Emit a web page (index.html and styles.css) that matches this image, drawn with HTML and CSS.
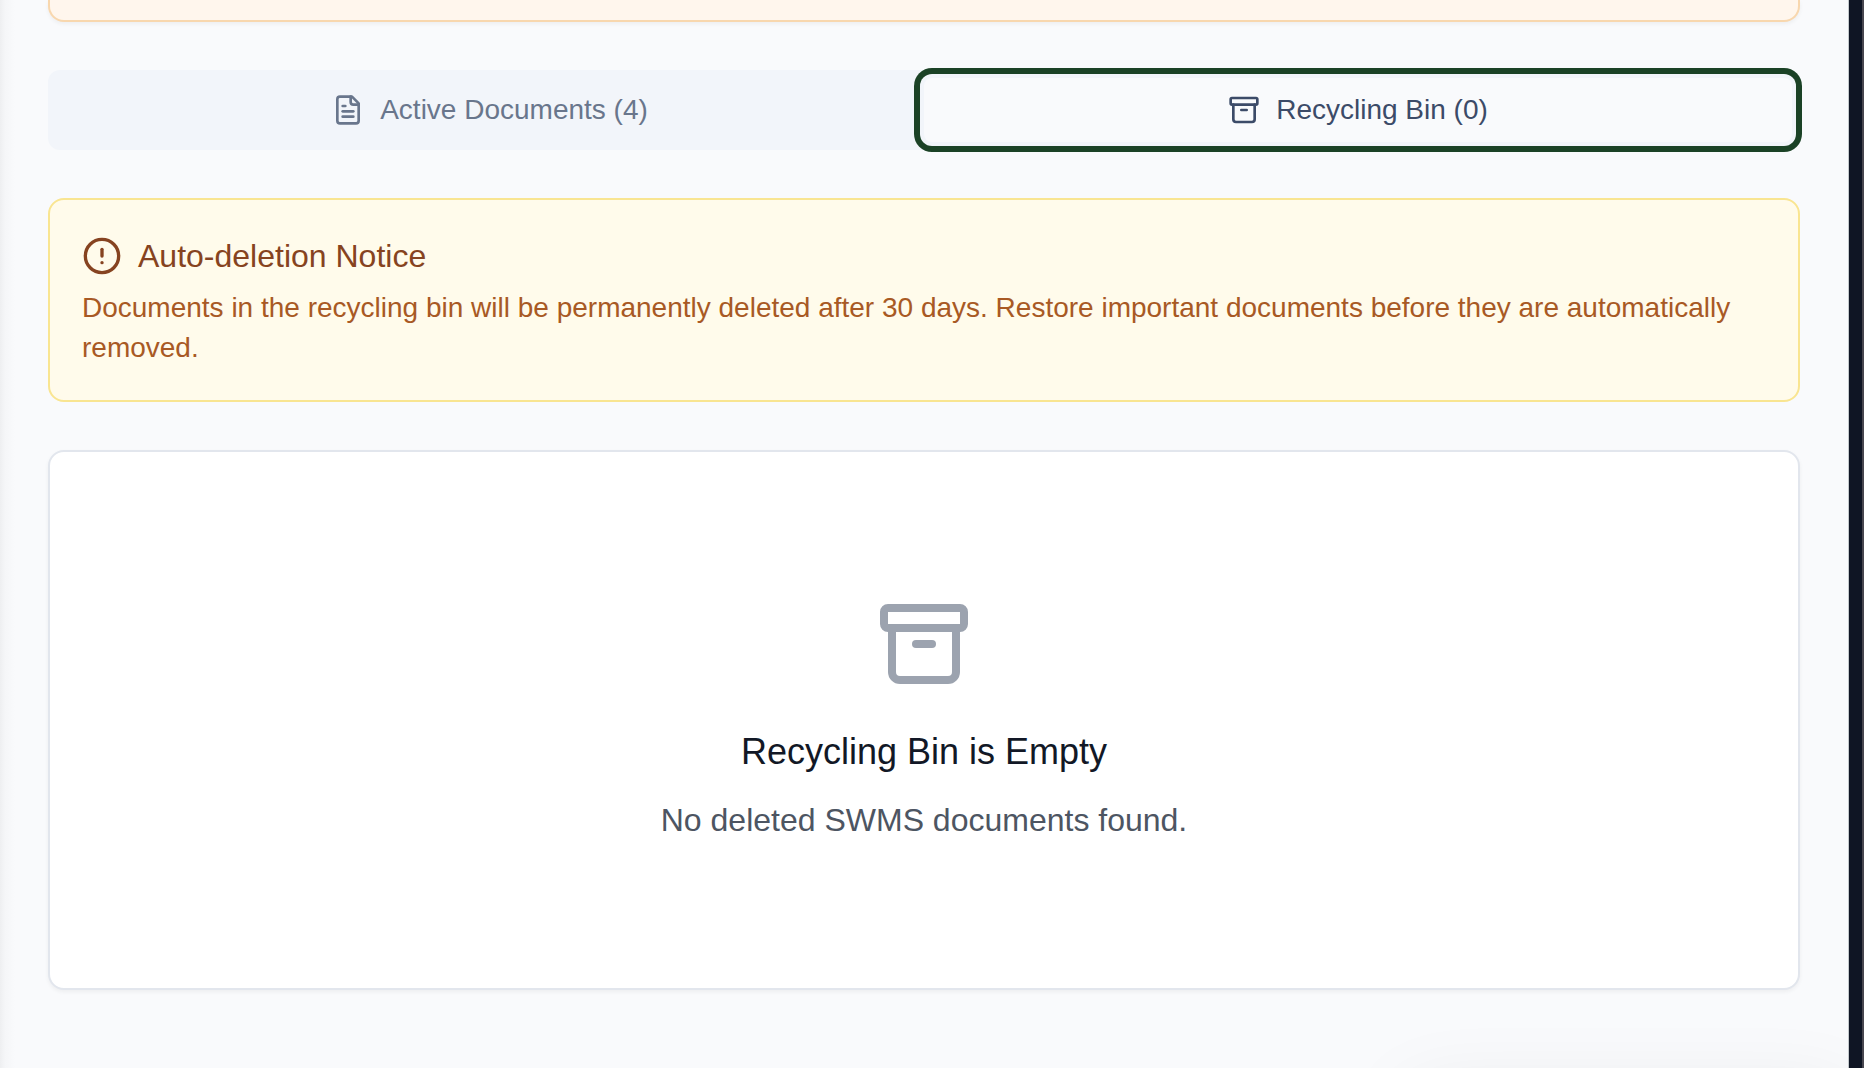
FILE: index.html
```html
<!DOCTYPE html>
<html lang="en">
<head>
<meta charset="utf-8">
<meta name="viewport" content="width=device-width, initial-scale=1">
<title>SWMS Documents</title>
<link rel="stylesheet" href="styles.css">
</head>
<body>
<div class="layout">
  <main class="content">
    <div class="banner"></div>
    <div class="tabs" role="tablist">
      <button class="tab" type="button" role="tab" aria-selected="false">
        <svg class="icon-sm" viewBox="0 0 24 24" aria-hidden="true"><path d="M15 2H6a2 2 0 0 0-2 2v16a2 2 0 0 0 2 2h12a2 2 0 0 0 2-2V7Z"/><path d="M14 2v4a2 2 0 0 0 2 2h4"/><path d="M10 9H8"/><path d="M16 13H8"/><path d="M16 17H8"/></svg>
        Active Documents (4)
      </button>
      <button class="tab tab-active" type="button" role="tab" aria-selected="true">
        <svg class="icon-sm" viewBox="0 0 24 24" aria-hidden="true"><rect width="20" height="5" x="2" y="3" rx="1"/><path d="M4 8v11a2 2 0 0 0 2 2h12a2 2 0 0 0 2-2V8"/><path d="M10 12h4"/></svg>
        Recycling Bin (0)
      </button>
    </div>
    <section class="notice">
      <h2 class="notice-title">
        <svg class="icon-md" viewBox="0 0 24 24" aria-hidden="true"><circle cx="12" cy="12" r="10"/><path d="M12 8v4"/><path d="M12 16h.01"/></svg>
        Auto-deletion Notice
      </h2>
      <p class="notice-text">Documents in the recycling bin will be permanently deleted after 30 days. Restore important documents before they are automatically removed.</p>
    </section>
    <section class="empty">
      <svg class="icon-lg" viewBox="0 0 24 24" aria-hidden="true"><rect width="20" height="5" x="2" y="3" rx="1"/><path d="M4 8v11a2 2 0 0 0 2 2h12a2 2 0 0 0 2-2V8"/><path d="M10 12h4"/></svg>
      <h3 class="empty-title">Recycling Bin is Empty</h3>
      <p class="empty-text">No deleted SWMS documents found.</p>
    </section>
    <div class="float-shadow"></div>
  </main>
  <div class="edge"></div>
</div>
</body>
</html>
```
FILE: styles.css
```css
* {
  box-sizing: border-box;
}

body {
  margin: 0;
  font-family: "Liberation Sans", Arial, sans-serif;
  background: #f9fafc;
}

h2, h3, p {
  margin: 0;
  font-weight: 400;
}

svg {
  flex: none;
  fill: none;
  stroke: currentColor;
  stroke-width: 2;
  stroke-linecap: round;
  stroke-linejoin: round;
}

.layout {
  display: flex;
  min-height: 100vh;
}

.content {
  position: relative;
  flex: 1;
  display: flex;
  flex-direction: column;
  gap: 48px;
  padding: 0 48px 48px;
  overflow: hidden;
  background: linear-gradient(to right, #eeeff1 0, #f5f6f8 5px, #f9fafc 15px);
}

.edge {
  width: 16px;
  background: #0f1524;
  border-left: 1px solid #c3c9cc;
  border-right: 2px solid #47464f;
}

.banner {
  height: 22px;
  border: 2px solid #f8d7ae;
  border-top: 0;
  border-radius: 0 0 16px 16px;
  background: #fff6ed;
  box-shadow: 0 2px 4px rgba(0, 0, 0, 0.05);
}

.tabs {
  display: grid;
  grid-template-columns: 1fr 1fr;
  padding: 8px;
  border-radius: 12px;
  background: #f2f5fa;
}

.tab {
  display: flex;
  align-items: center;
  justify-content: center;
  gap: 16px;
  height: 64px;
  padding: 0 24px;
  border: 0;
  border-radius: 8px;
  background: transparent;
  color: #69768c;
  font: 28px/40px "Liberation Sans", Arial, sans-serif;
}

.tab-active {
  background: #f9fafc;
  color: #3c4b68;
  box-shadow: 0 0 0 4px #f2f5fa, 0 0 0 10px #1b4226;
}

.icon-sm {
  width: 32px;
  height: 32px;
}

.icon-md {
  width: 40px;
  height: 40px;
}

.icon-lg {
  width: 96px;
  height: 96px;
  margin-bottom: 32px;
  color: #9ca3af;
}

.notice {
  padding: 32px;
  border: 2px solid #f9e591;
  border-radius: 16px;
  background: #fffbeb;
}

.notice-title {
  display: flex;
  align-items: center;
  gap: 16px;
  margin-bottom: 8px;
  font-size: 32px;
  line-height: 48px;
  color: #864320;
}

.notice-text {
  font-size: 28px;
  line-height: 40px;
  color: #a85924;
}

.empty {
  display: flex;
  flex-direction: column;
  align-items: center;
  padding: 144px 48px;
  border: 2px solid #e2e6ed;
  border-radius: 16px;
  background: #ffffff;
  box-shadow: 0 2px 4px rgba(0, 0, 0, 0.05);
}

.empty-title {
  margin-bottom: 16px;
  font-size: 36px;
  line-height: 56px;
  color: #121826;
}

.empty-text {
  font-size: 32px;
  line-height: 48px;
  color: #4d5562;
}

.float-shadow {
  position: absolute;
  top: 100%;
  right: 0;
  width: 440px;
  height: 200px;
  box-shadow: 0 24px 80px rgba(0, 0, 0, 0.08);
}
```
